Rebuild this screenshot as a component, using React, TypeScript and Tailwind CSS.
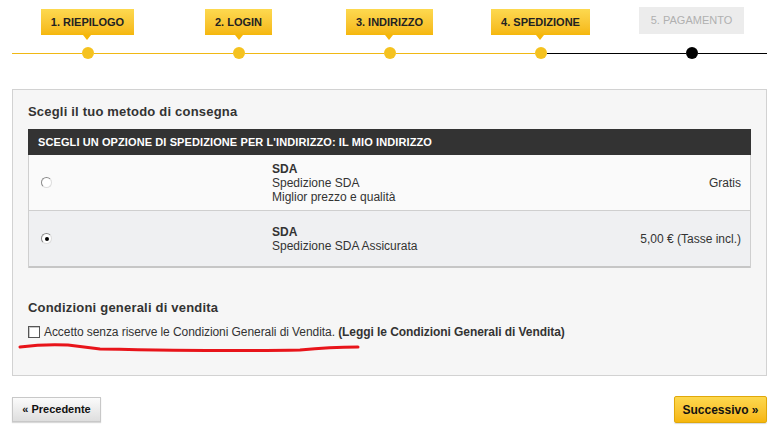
import React from 'react';

type Step = { label: string; done: boolean };

const steps: Step[] = [
  { label: '1. RIEPILOGO', done: true },
  { label: '2. LOGIN', done: true },
  { label: '3. INDIRIZZO', done: true },
  { label: '4. SPEDIZIONE', done: true },
  { label: '5. PAGAMENTO', done: false },
];

// one column of the progress bar: tab on top, dot sitting on the line
const StepColumn: React.FC<{ step: Step; leftYellow: boolean; rightYellow: boolean }> = ({ step, leftYellow, rightYellow }) => (
  <div className="flex flex-col items-center">
    <div className="h-[40px] flex flex-col items-center justify-end">
      {step.done ? (
        <>
          <div className="h-[26px] px-[10px] flex items-center text-[11px] font-bold text-[#222] bg-gradient-to-b from-[#fdd94f] to-[#f5b709]">
            {step.label}
          </div>
          <div className="w-0 h-0 border-l-[4px] border-r-[4px] border-t-[5px] border-l-transparent border-r-transparent border-t-[#f5b709]" />
        </>
      ) : (
        <div className="h-[27px] mb-[6px] px-[12px] flex items-center text-[11px] text-[#b0b0b0] bg-[#ececec]">
          {step.label}
        </div>
      )}
    </div>
    <div className="mt-[7px] h-[12px] w-full flex items-center">
      <div className={`flex-1 h-px ${leftYellow ? 'bg-[#f0b814]' : 'bg-black'}`} />
      <div className={`w-[12px] h-[12px] rounded-full ${step.done ? 'bg-[#f5c21f]' : 'bg-black'}`} />
      <div className={`flex-1 h-px ${rightYellow ? 'bg-[#f0b814]' : 'bg-black'}`} />
    </div>
  </div>
);

const Radio: React.FC<{ checked?: boolean }> = ({ checked }) => (
  <div className="w-[11px] h-[11px] rounded-full border border-[#8a8a8a] border-r-[#dcdcdc] border-b-[#dcdcdc] bg-white flex items-center justify-center">
    {checked && <div className="w-[4px] h-[4px] rounded-full bg-black" />}
  </div>
);

export default function App() {
  return (
    <div className="relative w-[779px] h-[437px] bg-white px-[12px] font-['Liberation_Sans',Arial,sans-serif] text-[#333]">
      <div className="grid grid-cols-5">
        {steps.map((s, i) => (
          <StepColumn key={s.label} step={s} leftYellow={i < 4} rightYellow={i < 3} />
        ))}
      </div>

      <div className="mt-[30px] h-[287px] border border-[#d2d2d2] bg-[#f6f6f6] px-[15px] pt-[14px]">
        <h3 className="text-[13px] leading-[16px] font-bold text-[#333] tracking-[0.2px]">Scegli il tuo metodo di consegna</h3>

        <div className="mt-[9px]">
          <div className="h-[26px] px-[10px] flex items-center bg-[#333] text-white text-[11px] font-bold tracking-[0.1px]">
            SCEGLI UN OPZIONE DI SPEDIZIONE PER L'INDIRIZZO: IL MIO INDIRIZZO
          </div>
          <div className="border-l border-r border-[#cfcfcf] text-[12px] leading-[14px]">
            <div className="h-[56px] flex items-center bg-[#fafafa] border-b border-[#cfcfcf]">
              <div className="w-[243px] pl-[12px]">
                <Radio />
              </div>
              <div className="flex-1">
                <div className="font-bold">SDA</div>
                <div>Spedizione SDA</div>
                <div>Miglior prezzo e qualità</div>
              </div>
              <div className="pr-[9px]">Gratis</div>
            </div>
            <div className="h-[57px] flex items-center bg-[#eff0f2] border-b-2 border-[#c6c6c6]">
              <div className="w-[243px] pl-[12px]">
                <Radio checked />
              </div>
              <div className="flex-1">
                <div className="font-bold">SDA</div>
                <div>Spedizione SDA Assicurata</div>
              </div>
              <div className="pr-[9px]">5,00 € (Tasse incl.)</div>
            </div>
          </div>
        </div>

        <h3 className="mt-[32px] text-[13px] leading-[16px] font-bold text-[#333] tracking-[0.2px]">Condizioni generali di vendita</h3>
        <div className="mt-[9px] flex items-center gap-[4px] text-[12px] leading-[14px] tracking-[-0.07px]">
          <div className="w-[12px] h-[12px] border border-[#555] bg-white shadow-[inset_1px_1px_0_#c8c8c8]" />
          <span>
            Accetto senza riserve le Condizioni Generali di Vendita. <b>(Leggi le Condizioni Generali di Vendita)</b>
          </span>
        </div>
      </div>

      <div className="mt-[21px] flex justify-between items-start">
        <button className="h-[25px] w-[89px] border border-[#c8c8c8] bg-gradient-to-b from-[#fbfbfb] to-[#dedede] text-[11px] font-bold text-[#111] shadow-[0_1px_1px_rgba(0,0,0,0.15)]">
          « Precedente
        </button>
        <button className="-mt-px h-[27px] w-[93px] border border-[#e0a80a] rounded-[2px] bg-gradient-to-b from-[#fdd84d] to-[#f6b60a] text-[12px] font-bold text-[#111] shadow-[0_1px_1px_rgba(0,0,0,0.15)]">
          Successivo »
        </button>
      </div>

      {/* red hand-drawn annotation */}
      <svg className="absolute left-0 top-0 pointer-events-none" width="779" height="437">
        <path
          d="M20 347 C 35 345 50 344 68 345 L 100 349 C 150 350 250 351 300 350 C 320 348 340 347 358 347"
          fill="none"
          stroke="#e8141a"
          strokeWidth="3"
          strokeLinecap="round"
        />
      </svg>
    </div>
  );
}
